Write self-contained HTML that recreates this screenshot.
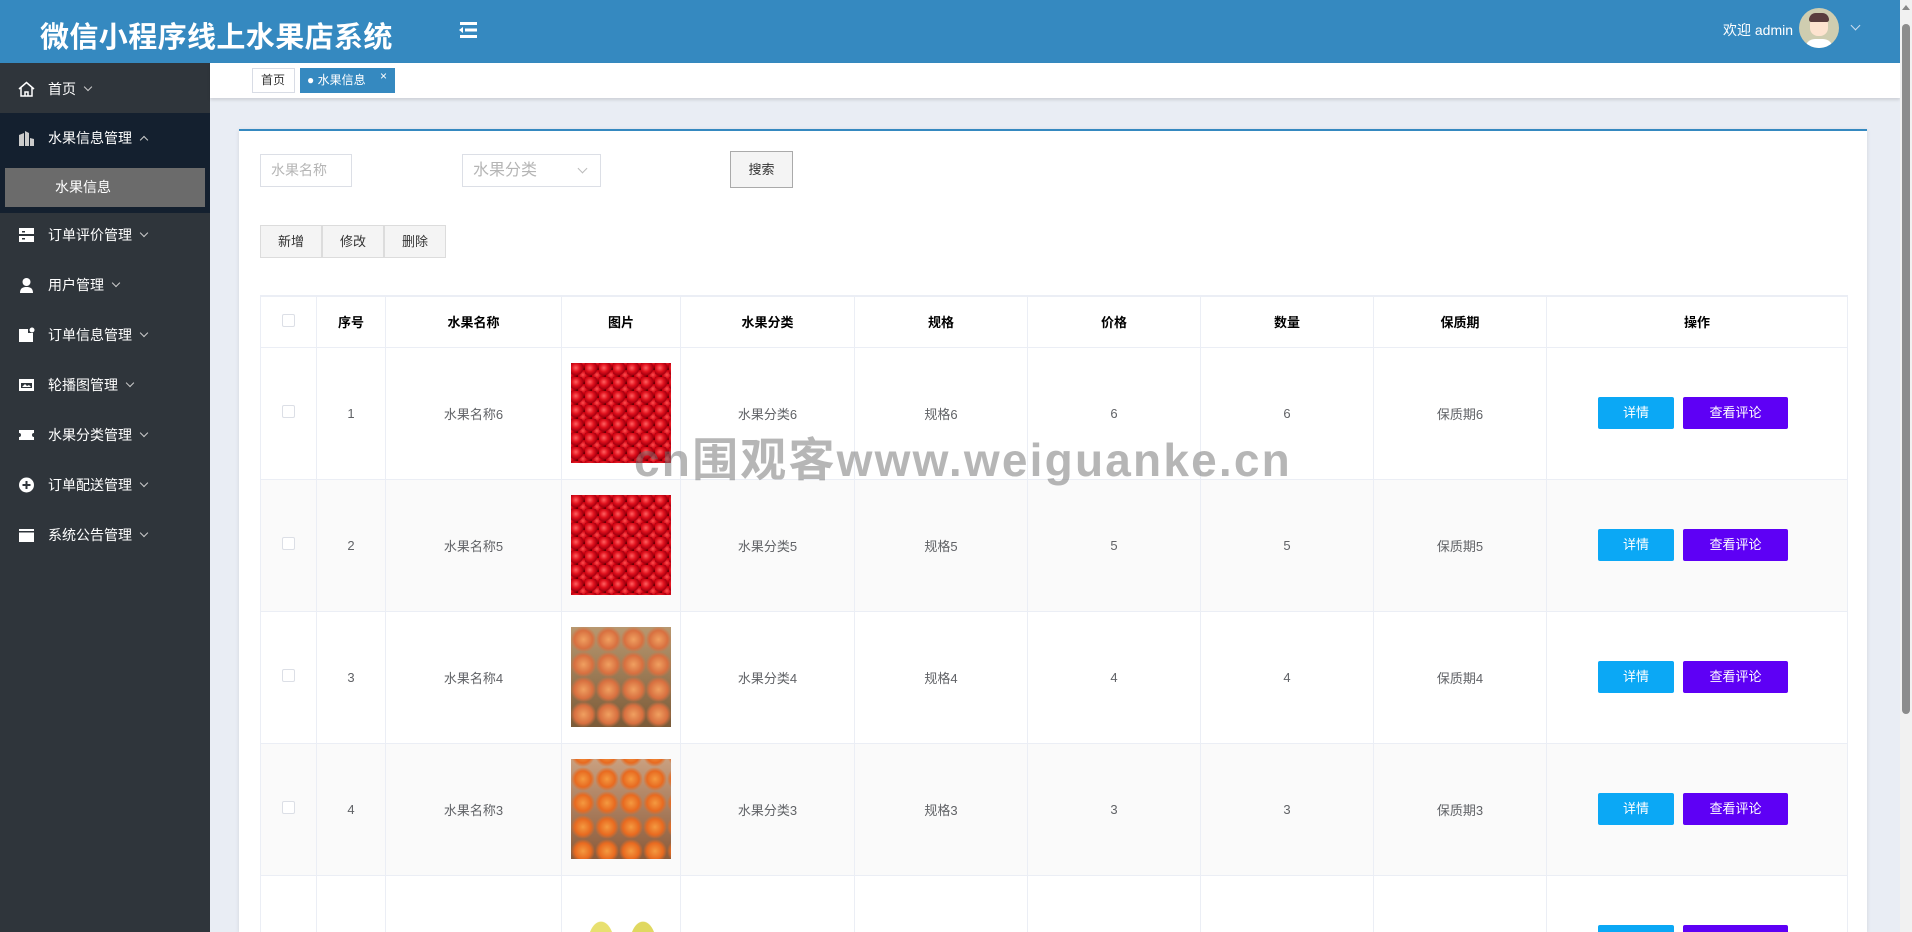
<!DOCTYPE html>
<html><head><meta charset="utf-8"><style>
*{box-sizing:border-box;margin:0;padding:0}
html,body{width:1912px;height:932px;overflow:hidden}
body{background:#e9edf4;font-family:"Liberation Sans","Noto Sans CJK SC",sans-serif;font-size:14px;color:#606266;position:relative}
#wrap{position:absolute;left:0;top:0;width:1912px;height:932px;overflow:hidden}
.hd{position:absolute;left:0;top:0;width:1900px;height:63px;background:#3589c0;color:#fff}
.title{position:absolute;left:40px;top:14px;font-size:29px;font-weight:bold;letter-spacing:0.4px}
.menu{position:absolute;left:458px;top:21px}
.wel{position:absolute;left:1723px;top:20px;font-size:14px}
.av{position:absolute;left:1799px;top:8px;width:40px;height:40px;border-radius:50%;background:#cfcdb0;overflow:hidden}
.sb{position:absolute;left:0;top:63px;width:210px;height:869px;background:#2f353b}
.it{position:absolute;left:0;width:210px;height:50px;color:#fff;font-size:14px;line-height:50px;padding-left:48px}
.ic{position:absolute;left:18px;top:17px;width:17px;height:16px}
.chev{display:inline-block;width:6px;height:6px;border-right:1px solid #ccc;border-bottom:1px solid #ccc;transform:rotate(45deg);margin-left:9px;position:relative;top:-4px}
.chev.up{transform:rotate(-135deg);top:0}
.tabs{position:absolute;left:210px;top:63px;width:1690px;height:35px;background:#fff;box-shadow:0 2px 3px rgba(0,0,0,.12)}
.tab{position:absolute;top:5px;height:25px;font-size:12px;line-height:23px;border:1px solid #d8dce5;color:#333;padding:0 8px}
.card{position:absolute;left:239px;top:129px;width:1628px;height:803px;background:#fff;border-top:2px solid #3589c0;box-shadow:0 1px 4px rgba(0,0,0,.1);overflow:hidden}
.inp{position:absolute;border:1px solid #dcdfe6;color:#b5b5b5;font-size:14px;padding-left:10px;line-height:31px;height:33px}
.btn{position:absolute;background:#f4f4f4;border:1px solid #dcdcdc;font-size:13px;color:#333;text-align:center;line-height:31px;height:33px}
table{position:absolute;left:21px;top:164px;border-collapse:collapse;width:1587px;table-layout:fixed}
td,th{border:1px solid #ebeef5;text-align:center;font-size:13px;color:#606266}
th{height:51px;color:#000;font-weight:bold;border-top:2px solid #ebeef5}
tr.r td{height:132px}
tr.s td{background:#fafafa}
.cb{display:inline-block;width:13px;height:13px;border:1px solid #dcdfe6;border-radius:2px;background:#fff}
.img{width:100px;height:100px;margin:0 auto}
.ch{background:radial-gradient(circle at 35% 35%,#ff6060 0,#e0101c 4px,#a80010 7px,transparent 8px) 0 0/14px 14px,radial-gradient(circle at 35% 35%,#ff5050 0,#d00010 4px,#900008 7px,transparent 8px) 7px 7px/14px 14px,#6a0006}
.b1,.b2{display:inline-block;height:32px;line-height:32px;color:#fff;font-size:13px;border-radius:2px}
.b1{width:76px;background:#0ba8f5;margin-right:9px}
.b2{width:105px;background:#5e00f5;margin-right:8px}
.wm{position:absolute;left:634px;top:424px;font-size:46px;color:rgba(110,110,110,.5);font-weight:bold;letter-spacing:2.2px}
.scr{position:absolute;left:1900px;top:0;width:12px;height:932px;background:#f1f1f1}
.th{position:absolute;left:2px;top:24px;width:8px;height:690px;background:#8c8c8c;border-radius:4px}
</style></head><body><div id="wrap">
<div class="hd">
<div class="title">微信小程序线上水果店系统</div>
<svg class="menu" width="20" height="18" viewBox="0 0 20 18"><g fill="#fff"><rect x="2" y="1" width="17" height="3"/><rect x="7" y="7.5" width="12" height="3"/><rect x="2" y="14" width="17" height="3"/><path d="M1 9l4-3v6z"/></g></svg>
<div class="wel">欢迎 admin</div>
<div class="av"><div style="position:absolute;left:11px;top:8px;width:18px;height:20px;background:#fde3cf;border-radius:8px"></div><div style="position:absolute;left:10px;top:5px;width:20px;height:9px;background:#5a3d3d;border-radius:9px 9px 3px 3px"></div><div style="position:absolute;left:6px;top:31px;width:28px;height:12px;background:#fff;border-radius:10px 10px 0 0"></div></div>
<span style="position:absolute;left:1852px;top:22px;width:7px;height:7px;border-right:1px solid #cde;border-bottom:1px solid #cde;transform:rotate(45deg)"></span>
</div>
<div class="sb">
<div class="it" style="top:1px"><svg class="ic" viewBox="0 0 17 16"><path d="M1 8L8.5 1.5 16 8M3 6.5V15h11V6.5M7 15v-4h3v4" fill="none" stroke="#fff" stroke-width="1.5"/></svg>首页<span class="chev"></span></div>
<div style="position:absolute;top:50px;left:0;width:210px;height:100px;background:#14202f"></div>
<div class="it" style="top:50px"><svg class="ic" viewBox="0 0 17 16"><path d="M1 16V5l5-2v13zM7 16V1l4 2v13zM12 16V8l4 1v7z" fill="#ccc"/></svg>水果信息管理<span class="chev up"></span></div>
<div style="position:absolute;left:5px;top:105px;width:200px;height:39px;background:#6b6b6b;color:#fff;line-height:39px;padding-left:50px">水果信息</div>
<div class="it" style="top:147px"><svg class="ic" viewBox="0 0 17 16"><path d="M1 1h15v6H1zM1 9h15v6H1z" fill="#fff"/><rect x="4" y="4" width="3" height="1.5" fill="#2f353b"/><rect x="4" y="11" width="3" height="1.5" fill="#2f353b"/></svg>订单评价管理<span class="chev"></span></div>
<div class="it" style="top:197px"><svg class="ic" viewBox="0 0 17 16"><circle cx="8.5" cy="5" r="4" fill="#fff"/><path d="M2 16c0-5 3-6 6.5-6s6.5 1 6.5 6z" fill="#fff"/></svg>用户管理<span class="chev"></span></div>
<div class="it" style="top:247px"><svg class="ic" viewBox="0 0 17 16"><path d="M1 2h9v4h5v9H1z" fill="#fff"/><circle cx="14" cy="3" r="2.5" fill="#fff"/></svg>订单信息管理<span class="chev"></span></div>
<div class="it" style="top:297px"><svg class="ic" viewBox="0 0 17 16"><rect x="1" y="2" width="15" height="12" fill="#fff"/><path d="M3 6h11v5H3z" fill="#2f353b"/><path d="M4 10l3-3 2 2 2-1 2 2z" fill="#fff"/></svg>轮播图管理<span class="chev"></span></div>
<div class="it" style="top:347px"><svg class="ic" viewBox="0 0 17 16"><path d="M1 3h15v3a2 2 0 0 0 0 4v3H1v-3a2 2 0 0 0 0-4z" fill="#fff"/></svg>水果分类管理<span class="chev"></span></div>
<div class="it" style="top:397px"><svg class="ic" viewBox="0 0 17 16"><circle cx="8.5" cy="8" r="7.5" fill="#fff"/><path d="M8.5 4v8M4.5 8h8" stroke="#2f353b" stroke-width="2"/></svg>订单配送管理<span class="chev"></span></div>
<div class="it" style="top:447px"><svg class="ic" viewBox="0 0 17 16"><rect x="1" y="2" width="15" height="13" fill="#fff"/><rect x="1" y="4" width="15" height="1.5" fill="#2f353b"/></svg>系统公告管理<span class="chev"></span></div>
</div>
<div class="tabs">
<div class="tab" style="left:42px;width:43px">首页</div>
<div class="tab" style="left:90px;width:95px;background:#3589c0;border-color:#3589c0;color:#fff;padding:0 6px">● 水果信息<span style="position:absolute;right:7px;top:-4px;font-size:12px">×</span></div>
</div>
<div class="card">
<div class="inp" style="left:21px;top:23px;width:92px">水果名称</div>
<div class="inp" style="left:223px;top:23px;width:139px;font-size:16px">水果分类<span style="position:absolute;left:116px;top:10px;width:7px;height:7px;border-right:1px solid #bbb;border-bottom:1px solid #bbb;transform:rotate(45deg)"></span></div>
<div class="btn" style="left:491px;top:20px;width:63px;height:37px;line-height:35px;border-color:#aaa">搜索</div>
<div class="btn" style="left:21px;top:94px;width:62px">新增</div>
<div class="btn" style="left:83px;top:94px;width:62px">修改</div>
<div class="btn" style="left:145px;top:94px;width:62px">删除</div>
<table>
<colgroup><col style="width:56px"><col style="width:69px"><col style="width:176px"><col style="width:119px"><col style="width:174px"><col style="width:173px"><col style="width:173px"><col style="width:173px"><col style="width:173px"><col style="width:301px"></colgroup>
<tr><th><span class="cb"></span></th><th>序号</th><th>水果名称</th><th>图片</th><th>水果分类</th><th>规格</th><th>价格</th><th>数量</th><th>保质期</th><th>操作</th></tr>
<tr class="r"><td><span class="cb"></span></td><td>1</td><td>水果名称6</td><td><div class="img ch"></div></td><td>水果分类6</td><td>规格6</td><td>6</td><td>6</td><td>保质期6</td><td><span class="b1">详情</span><span class="b2">查看评论</span></td></tr>
<tr class="r s"><td><span class="cb"></span></td><td>2</td><td>水果名称5</td><td><div class="img ch"></div></td><td>水果分类5</td><td>规格5</td><td>5</td><td>5</td><td>保质期5</td><td><span class="b1">详情</span><span class="b2">查看评论</span></td></tr>
<tr class="r"><td><span class="cb"></span></td><td>3</td><td>水果名称4</td><td><div class="img" style="background:radial-gradient(circle at 50% 50%,#f0a060 0,#d87040 9px,transparent 13px) 0 0/25px 25px,linear-gradient(#b89870,#7a5a38)"></div></td><td>水果分类4</td><td>规格4</td><td>4</td><td>4</td><td>保质期4</td><td><span class="b1">详情</span><span class="b2">查看评论</span></td></tr>
<tr class="r s"><td><span class="cb"></span></td><td>4</td><td>水果名称3</td><td><div class="img" style="background:radial-gradient(circle,#f49a40 0,#e86a20 8px,transparent 12px) 0 8px/24px 24px,linear-gradient(#c9a080,#8a5a3a)"></div></td><td>水果分类3</td><td>规格3</td><td>3</td><td>3</td><td>保质期3</td><td><span class="b1">详情</span><span class="b2">查看评论</span></td></tr>
<tr class="r"><td><span class="cb"></span></td><td>5</td><td>水果名称2</td><td><div class="img" style="background:radial-gradient(ellipse 22px 40px at 30% 55%,#e8e070 60%,transparent 62%),radial-gradient(ellipse 22px 40px at 72% 55%,#e0d860 60%,transparent 62%),#fff"></div></td><td>水果分类2</td><td>规格2</td><td>2</td><td>2</td><td>保质期2</td><td><span class="b1">详情</span><span class="b2">查看评论</span></td></tr>
</table>
</div>
<div class="wm">cn围观客www.weiguanke.cn</div>
<div class="scr"><div style="position:absolute;left:2px;top:5px;border:4px solid transparent;border-bottom:5px solid #888;border-top:0"></div><div class="th"></div></div>
</div></body></html>
